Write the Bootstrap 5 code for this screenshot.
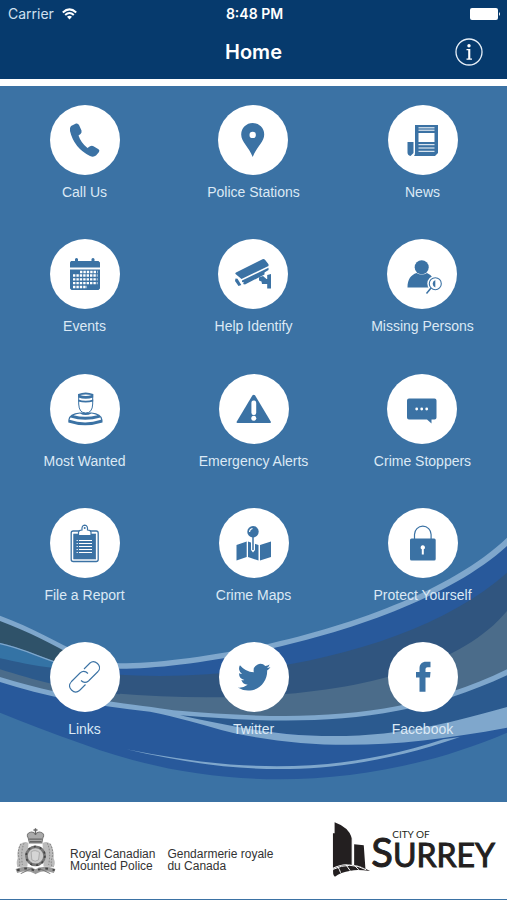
<!DOCTYPE html>
<html lang="en">
<head>
<meta charset="utf-8">
<meta name="viewport" content="width=device-width, initial-scale=1">
<title>Home</title>
<link rel="stylesheet" href="https://cdn.jsdelivr.net/npm/bootstrap@5.3.0/dist/css/bootstrap.min.css">
<style>
  :root { --navy: #063a6d; --blue: #3b72a4; }
  body { background: var(--blue); font-family: "Liberation Sans", Arial, sans-serif; }
  svg { display: block; flex-shrink: 0; }
  .app-header { background: var(--navy); border-bottom: 7px solid #fff; font-family: Inter, sans-serif; color: #fff; }
  .status-bar { height: 28px; font-size: 14px; line-height: 28px; padding: 0 6px 0 8px; }
  .status-bar .carrier { color: #cfe0f0; }
  .title-bar { height: 51px; padding: 0 23px; }
  .title-bar h1 { font-size: 20px; line-height: 48px; font-weight: 600; }
  .info-btn { width: 30px; height: 30px; margin-top: 9px; }
  .home { padding: 19px 0 61px; isolation: isolate; }
  .waves { height: 271px; z-index: -1; }
  .tile { color: #dce9f5; font-size: 14px; line-height: 20px; }
  .disc { width: 70px; height: 70px; background: #fff; color: var(--blue); margin-bottom: 7px; }
  .app-footer { background: #fff; border-bottom: 1px solid var(--blue); padding: 20px 12px 22px 15px; color: #333; }
  .agency { font-size: 12px; line-height: 12px; gap: 12px; padding-top: 20px; margin-left: 14px; }
  .city { font-family: Lato, sans-serif; color: #231f20; }
  .city-of { font-size: 10px; line-height: 10px; padding-left: 21px; }
  .city-name { font-size: 32px; line-height: 30px; margin-top: -2px; -webkit-text-stroke: 1px #231f20; }
  .city-name::first-letter { font-size: 40px; line-height: 30px; }
</style>
</head>
<body class="d-flex flex-column min-vh-100">

<header class="app-header">
  <div class="status-bar row g-0">
    <div class="col d-flex align-items-center carrier"><span>Carrier</span>
      <svg class="ms-2" width="15" height="12" viewBox="0 0 15 12" fill="none" stroke="#fff" stroke-width="2"><path d="M.8 4.500Q7.500-1.700 14.200 4.500M3.200 7Q7.500 3 11.800 7"/><path d="M7.500 11.500 5 8.800Q7.500 6.900 10 8.800Z" fill="#fff" stroke="none"/></svg>
    </div>
    <div class="col text-center fw-semibold">8:48 PM</div>
    <div class="col d-flex align-items-center justify-content-end">
      <svg width="31" height="12" viewBox="0 0 31 12" fill="#fff"><rect width="28" height="12" rx="2"/><path d="M29 4q2 2 0 4z"/></svg>
    </div>
  </div>
  <div class="title-bar row g-0">
    <div class="col"></div>
    <h1 class="col text-center m-0">Home</h1>
    <div class="col d-flex justify-content-end">
      <button type="button" class="btn p-0 border-0 info-btn" aria-label="Information">
        <svg width="30" height="30" viewBox="0 0 30 30"><circle cx="15" cy="15" r="13" fill="none" stroke="#e6eff8" stroke-width="1.300"/><circle cx="15" cy="8.700" r="1.700" fill="#fff"/><path d="M12.500 12H16.300v9.500H18v1.200h-5.500v-1.200h1.700v-8.300h-1.700z" fill="#fff"/></svg>
      </button>
    </div>
  </div>
</header>

<main class="home position-relative flex-grow-1 d-flex flex-column justify-content-between">
  <svg class="waves position-absolute bottom-0 start-0 w-100" viewBox="0 0 1521 813" preserveAspectRatio="none" aria-hidden="true">
    <path fill="#28599b" d="M0 420L1521 400V605C1100 785 640 785 250 640Q110 590 0 545Z"/>
    <path fill="#2b5a8f" d="M340 520L1521 420V560C1200 640 900 640 520 548Z"/>
    <path fill="#4b6c8a" d="M0 380C150 430 250 460 360 480C860 520 1300 420 1521 200V430C1240 570 850 590 340 520C200 500 100 475 0 445Z"/>
    <path fill="#2c5a8c" d="M0 370L160 400 360 420V490C200 478 100 445 0 415Z"/>
    <path fill="#3473a5" d="M0 338L170 385V412C100 405 50 392 0 382Z"/>
    <path fill="#30557f" d="M340 415C700 440 1250 340 1521 80V240C1340 460 860 530 340 487Z"/>
    <path fill="#28599b" d="M300 405C640 405 1260 280 1521 34V125C1270 350 760 460 340 430Z"/>
    <path fill="#2f5269" d="M0 262C90 300 160 330 250 385L200 405C120 375 60 350 0 335Z"/>
    <path fill="none" stroke="#7fa7cc" stroke-width="4" d="M0 338C60 350 110 375 180 398"/>
    <path fill="#7fa7cc" d="M0 254C100 290 170 335 250 370Q310 397 360 397C640 397 1260 270 1521 20V45C1260 285 640 413 360 413Q300 413 240 385C150 335 90 305 0 270Z"/>
    <path fill="#7fa7cc" d="M0 438C230 510 420 520 520 538C900 570 1200 570 1521 415V433C1200 583 900 583 540 553C640 575 750 598 860 609C1150 635 1350 575 1521 528V590C1200 650 960 660 700 606C600 580 530 557 450 542C280 525 130 495 0 453Z"/>
    <path fill="#7fa7cc" d="M380 655C700 720 1000 735 1330 625L1380 618C1000 750 700 730 380 655Z"/>
  </svg>

  <nav class="row g-0 text-center" aria-label="Contact">
    <div class="col"><a class="tile d-inline-block text-decoration-none" href="#call"><span class="disc d-block rounded-circle mx-auto"><svg viewBox="0 0 70 70" fill="currentColor"><path d="M21 21L26 18.500Q28 18 29 20L31.500 25.500Q32 27.500 30.500 29L28.500 30.500Q31 38 37.500 43L40 41.200Q42 40.200 43.500 41.200L48.500 44.200Q50 45.500 49 47L46 50.500Q43.500 52.500 40 51Q24 43 20 26Q19.500 22.500 21 21Z"/></svg></span>Call Us</a></div>
    <div class="col"><a class="tile d-inline-block text-decoration-none" href="#stations"><span class="disc d-block rounded-circle mx-auto"><svg viewBox="0 0 70 70" fill="currentColor"><path fill-rule="evenodd" d="M34.700 52C31 42 23.200 37 23.200 29.500a11.500 11.500 0 0 1 23 0C46.200 37 38.500 42 34.700 52ZM34.700 26.700a3.200 3.200 0 1 0 0 6.400a3.200 3.200 0 0 0 0-6.400Z"/></svg></span>Police Stations</a></div>
    <div class="col"><a class="tile d-inline-block text-decoration-none" href="#news"><span class="disc d-block rounded-circle mx-auto"><svg viewBox="0 0 70 70" fill="currentColor"><path d="M27 20H50V48L47 51H26Q27 50 27 48ZM19.500 37H25.500V48L22.500 51Q19.500 50 19.500 47.500Z"/><path fill="#fff" d="M30.500 28H46.500V37H30.500Z"/><path stroke="#fff" stroke-width="1" d="M30.500 22.800H46.500M30.500 25.200H46.500M30.500 39.700H46.500M30.500 43H46.500M30.500 46.300H46.500"/></svg></span>News</a></div>
  </nav>

  <nav class="row g-0 text-center" aria-label="Community">
    <div class="col"><a class="tile d-inline-block text-decoration-none" href="#events"><span class="disc d-block rounded-circle mx-auto"><svg viewBox="0 0 70 70" fill="currentColor"><path d="M21 22H25V20Q26.500 18 28 20V22H41.500V20Q43 18 44.500 20V22H48.500L50 23.500V28.500H20V23.500ZM20 30.500H50V49.500L48.500 51H21.500L20 49.500Z"/><path stroke="#fff" stroke-width="2.300" stroke-dasharray="2.400 1" d="M30 33H47.500M23 36.500H47.500M23 40.300H47.500M23 44.200H47.500M23 48H37"/></svg></span>Events</a></div>
    <div class="col"><a class="tile d-inline-block text-decoration-none" href="#identify"><span class="disc d-block rounded-circle mx-auto"><svg viewBox="0 0 70 70" fill="currentColor"><path d="M17.500 35Q17 34 18 33.500L44.500 20.200Q46 19.800 47 20.800L50.500 25.300V27L23.500 40ZM24 41.500L50.500 28.800V31L46.500 33.500V35.500L27 45.500L25 45L26 43.500L24 43ZM17.500 39.500L19.500 39.800L23.300 46L20.500 47L17 42ZM41 38.500L45 37L48.500 40H49.200V36L53 35V49.500H49.200V45H44L43.500 42.500L41 41.500Z"/></svg></span>Help Identify</a></div>
    <div class="col"><a class="tile d-inline-block text-decoration-none" href="#missing"><span class="disc d-block rounded-circle mx-auto"><svg viewBox="0 0 70 70" fill="currentColor"><circle cx="34.700" cy="28.300" r="7"/><path d="M20.500 48.500C20.500 40 24 36 29.500 34Q34.700 37 40 34Q44 35.500 47 40L43 48.500Z"/><circle cx="48.300" cy="44.700" r="8" fill="#fff"/><circle cx="48.300" cy="44.700" r="6" fill="none" stroke="currentColor" stroke-width="1.100"/><path d="M48.300 41a4 4 0 0 0 0 7.500Z"/><path fill="none" stroke="currentColor" stroke-width="1.500" d="M44 49L39.500 54.500"/></svg></span>Missing Persons</a></div>
  </nav>

  <nav class="row g-0 text-center" aria-label="Alerts">
    <div class="col"><a class="tile d-inline-block text-decoration-none" href="#wanted"><span class="disc d-block rounded-circle mx-auto"><svg viewBox="0 0 70 70" fill="currentColor"><path d="M30 38.500Q19 39 18.300 46V48.500Q35 54 52.500 48.500V46Q51.500 39 41.500 38.500Z"/><path fill="#fff" d="M30 39.500Q26 40 23.500 41.200Q35 44.500 47.500 41.200Q45 40 41.500 39.500Q35.500 42.500 30 39.500ZM20.500 43.500Q35 48 50.500 43.500L51 45.800Q35 51 19.500 45.800Z"/><path fill="#fff" stroke="currentColor" stroke-width="1" d="M28.700 20V30Q29 39 35.700 39T42.700 30V20"/><path d="M28.200 20Q35.700 17 43.200 20V23.500Q35.700 26 28.200 23.500ZM28.200 25.500Q35.700 28 43.200 25.500V27.500Q35.700 29.500 28.200 27.500Z"/><path fill="#fff" d="M30 21Q35.700 23 41.500 21Q35.700 20 30 21Z"/></svg></span>Most Wanted</a></div>
    <div class="col"><a class="tile d-inline-block text-decoration-none" href="#emergency"><span class="disc d-block rounded-circle mx-auto"><svg viewBox="0 0 70 70" fill="currentColor"><path d="M33.500 21.300Q34.700 20 36 21.300L52 48Q52 49 51 49H18.500Q17.500 49 17.500 48Z"/><rect x="32.400" y="26.500" width="4.800" height="14.500" rx="2.200" fill="#fff"/><circle cx="34.800" cy="44.300" r="2.500" fill="#fff"/></svg></span>Emergency Alerts</a></div>
    <div class="col"><a class="tile d-inline-block text-decoration-none" href="#stoppers"><span class="disc d-block rounded-circle mx-auto"><svg viewBox="0 0 70 70" fill="currentColor"><path d="M22 24.500H47.500Q49.500 24.500 49.500 26.500V43.500Q49.500 45.500 47.500 45.500H44.500V49.500L40 45.500H22Q20 45.500 20 43.500V26.500Q20 24.500 22 24.500Z"/><g fill="#fff"><circle cx="29.700" cy="35" r="1.400"/><circle cx="34.700" cy="35" r="1.400"/><circle cx="39.700" cy="35" r="1.400"/></g></svg></span>Crime Stoppers</a></div>
  </nav>

  <nav class="row g-0 text-center" aria-label="Safety">
    <div class="col"><a class="tile d-inline-block text-decoration-none" href="#report"><span class="disc d-block rounded-circle mx-auto"><svg viewBox="0 0 70 70" fill="currentColor"><rect x="21.200" y="23" width="27" height="30.500" rx="2" fill="#fff" stroke="currentColor" stroke-width="1.300"/><rect x="23.700" y="26" width="22" height="25" stroke="currentColor" stroke-width=".6"/><path fill="#fff" stroke="currentColor" stroke-width="1.200" d="M28.500 27.500V24Q29 22 32 22Q31.500 17.500 34.700 17.200Q38 17.500 37.500 22Q40.500 22 41 24V27.500Z"/><circle cx="34.700" cy="20" r="1"/><path stroke="#fff" stroke-width="1" d="M29 32.500H42M29 35.500H42M29 38.500H42M29 41.500H42M29 44.500H42"/><path stroke="#fff" stroke-width=".8" d="M26.500 32.500H28M26.500 35.500H28M26.500 38.500H28M26.500 41.500H28M26.500 44.500H28"/></svg></span>File a Report</a></div>
    <div class="col"><a class="tile d-inline-block text-decoration-none" href="#maps"><span class="disc d-block rounded-circle mx-auto"><svg viewBox="0 0 70 70" fill="currentColor"><path d="M17.500 37L27.700 33.500V49L17.500 52.500ZM29 33.500L39.500 37V52.500L29 49ZM41 37L52 33.500V49L41 52.500Z"/><path fill="#fff" d="M32 34H36V42L34 44.500L32 42Z"/><circle cx="34" cy="23.700" r="5.700"/><path stroke="currentColor" stroke-width="1.500" d="M34 28V42"/><path fill="none" stroke="#fff" stroke-width="1.100" d="M30.500 24Q30.700 21 33.500 20.500"/></svg></span>Crime Maps</a></div>
    <div class="col"><a class="tile d-inline-block text-decoration-none" href="#protect"><span class="disc d-block rounded-circle mx-auto"><svg viewBox="0 0 70 70" fill="currentColor"><rect x="22" y="30.500" width="25.700" height="22" rx="1.500"/><path fill="none" stroke="currentColor" stroke-width="1.200" d="M26.500 31V26.500a8.300 8.300 0 0 1 16.600 0V31"/><path fill="#fff" d="M34.800 37.300a2.100 2.100 0 0 1 1 4V46.500H33.800V41.300a2.100 2.100 0 0 1 1-4Z"/></svg></span>Protect Yourself</a></div>
  </nav>

  <nav class="row g-0 text-center" aria-label="Online">
    <div class="col"><a class="tile d-inline-block text-decoration-none" href="#links"><span class="disc d-block rounded-circle mx-auto"><svg viewBox="0 0 70 70" fill="none" stroke="currentColor" stroke-width="1.100"><path d="M34 27L40 21Q43.500 18 47.500 21.500Q51.500 25.500 48 29.500L38.500 39Q34.500 42 31 38.500M38 31.500Q34 27.500 30 31L21.500 39.500Q17.500 44 21.500 48Q25.500 52 29.500 48.500L35.500 42.500"/></svg></span>Links</a></div>
    <div class="col"><a class="tile d-inline-block text-decoration-none" href="#twitter"><span class="disc d-block rounded-circle mx-auto"><svg viewBox="0 0 70 70" fill="currentColor"><path transform="translate(18.700 17.800) scale(2.050)" d="M5.026 15c6.038 0 9.341-5.003 9.341-9.334 0-.14 0-.282-.006-.422A6.685 6.685 0 0 0 16 3.542a6.658 6.658 0 0 1-1.889.518 3.301 3.301 0 0 0 1.447-1.817 6.533 6.533 0 0 1-2.087.793A3.286 3.286 0 0 0 7.875 6.030a9.325 9.325 0 0 1-6.767-3.429 3.289 3.289 0 0 0 1.018 4.382A3.323 3.323 0 0 1 .64 6.575v.045a3.288 3.288 0 0 0 2.632 3.218 3.203 3.203 0 0 1-.865.115 3.230 3.230 0 0 1-.614-.057 3.283 3.283 0 0 0 3.067 2.277A6.588 6.588 0 0 1 .78 13.580a6.320 6.320 0 0 1-.78-.045A9.344 9.344 0 0 0 5.026 15z"/></svg></span>Twitter</a></div>
    <div class="col"><a class="tile d-inline-block text-decoration-none" href="#facebook"><span class="disc d-block rounded-circle mx-auto"><svg viewBox="0 0 70 70" fill="currentColor"><path d="M31.500 49.700V35.500H28V30H31.500V26.500C31.500 22 34 19.700 38 19.700H42.500V25.200H39.500Q37.500 25.200 37.500 27V30H42.500L42 35.500H37.500V49.700Z"/></svg></span>Facebook</a></div>
  </nav>
</main>

<footer class="app-footer d-flex justify-content-between align-items-center">
  <div class="d-flex align-items-start">
    <svg class="mt-1" width="41" height="47" viewBox="48 75 122 140" role="img" aria-label="Police crest">
      <path fill="#bbb" d="M62 125Q75 112 88 120L85 190 56 192Q50 180 56 165 52 150 62 125ZM156 125Q145 112 130 120L133 190 163 192Q170 180 163 165 166 150 156 125Z"/>
      <path fill="none" stroke="#888" stroke-width="3" stroke-dasharray="5 4" d="M66 122Q54 140 60 165T56 190M75 120Q64 145 70 185M152 122Q164 140 158 165T162 190M144 120Q156 145 148 185"/>
      <path fill="#aaa" stroke="#777" stroke-width="3" d="M87 104Q80 94 92 88 102 85 109 94 116 85 126 88 138 94 131 104L128 120H91Z"/>
      <path stroke="#666" stroke-width="4" d="M109 76V96M103 81H115M90 108H128M92 116H127"/>
      <circle cx="109" cy="158" r="27" fill="#ccc" stroke="#777" stroke-width="8"/>
      <circle cx="109" cy="158" r="28" fill="none" stroke="#444" stroke-width="5" stroke-dasharray="6 12"/>
      <path fill="#d5d5d5" stroke="#999" stroke-width="2" d="M96 146Q108 138 121 148L118 170Q108 178 98 170Z"/>
      <path fill="none" stroke="#999" stroke-width="13" d="M52 203Q85 190 109 205Q133 190 166 203"/>
      <path fill="none" stroke="#444" stroke-width="6" stroke-dasharray="8 14" d="M54 201Q85 189 109 204Q133 189 166 201"/>
      <path fill="none" stroke="#777" stroke-width="3" d="M65 211L100 194M153 211L118 194"/>
    </svg>
    <div class="agency d-flex mt-1">
      <div>Royal Canadian<br>Mounted Police</div>
      <div>Gendarmerie royale<br>du Canada</div>
    </div>
  </div>
  <div class="city d-flex align-items-center">
    <svg width="39" height="55" viewBox="76 66 116 166" fill="#231f20" role="img" aria-label="City skyline">
      <path d="M83 67Q126 82 136 116V196Q110 188 78 204V100H83Z"/>
      <path d="M142 133L171 136 176 207Q160 198 142 196Z"/>
      <path d="M79 207Q130 180 190 214Q150 208 132 213 100 218 84 231Q76 225 79 207Z"/>
      <path fill="none" stroke="#fff" stroke-width="3" d="M136 106V196M78 209Q130 184 178 210M92 201Q98 208 101 219M118 196 130 213M143 197 156 210"/>
    </svg>
    <div>
      <div class="city-of">CITY OF</div>
      <div class="city-name">SURREY</div>
    </div>
  </div>
</footer>

<script src="https://cdn.jsdelivr.net/npm/bootstrap@5.3.0/dist/js/bootstrap.bundle.min.js"></script>
</body>
</html>
